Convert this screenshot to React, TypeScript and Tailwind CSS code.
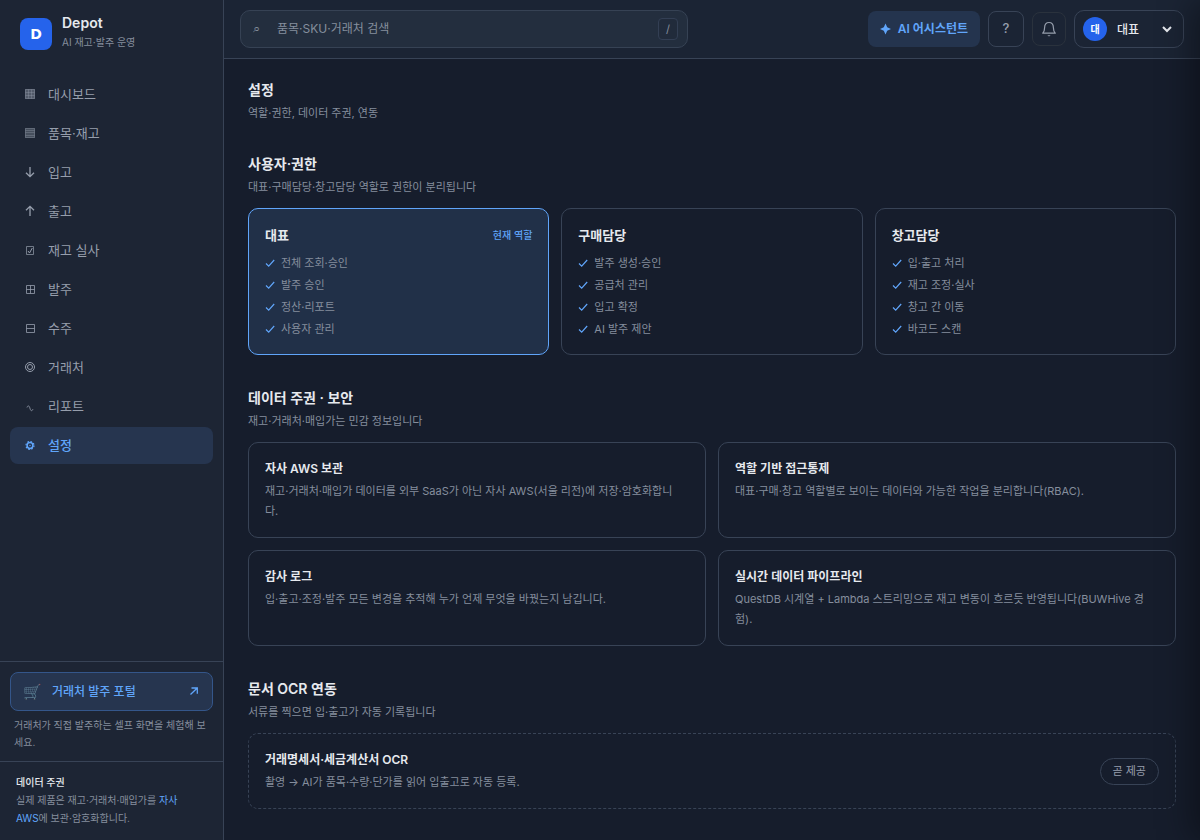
import React from 'react';

const NAV = [
  { icon: 'grid', label: '대시보드' },
  { icon: 'rows', label: '품목·재고' },
  { icon: 'down', label: '입고' },
  { icon: 'up', label: '출고' },
  { icon: 'check', label: '재고 실사' },
  { icon: 'plus', label: '발주' },
  { icon: 'minus', label: '수주' },
  { icon: 'rings', label: '거래처' },
  { icon: 'wave', label: '리포트' },
  { icon: 'gear', label: '설정', active: true },
];

const ROLES = [
  { name: '대표', current: true, perms: ['전체 조회·승인', '발주 승인', '정산·리포트', '사용자 관리'] },
  { name: '구매담당', perms: ['발주 생성·승인', '공급처 관리', '입고 확정', 'AI 발주 제안'] },
  { name: '창고담당', perms: ['입·출고 처리', '재고 조정·실사', '창고 간 이동', '바코드 스캔'] },
];

const POLICIES = [
  { title: '자사 AWS 보관', text: '재고·거래처·매입가 데이터를 외부 SaaS가 아닌 자사 AWS(서울 리전)에 저장·암호화합니다.' },
  { title: '역할 기반 접근통제', text: '대표·구매·창고 역할별로 보이는 데이터와 가능한 작업을 분리합니다(RBAC).' },
  { title: '감사 로그', text: '입·출고·조정·발주 모든 변경을 추적해 누가 언제 무엇을 바꿨는지 남깁니다.' },
  { title: '실시간 데이터 파이프라인', text: 'QuestDB 시계열 + Lambda 스트리밍으로 재고 변동이 흐르듯 반영됩니다(BUWHive 경험).' },
];

const ICONS: Record<string, React.ReactNode> = {
  grid: (
    <>
      <rect x="3" y="3" width="10" height="10" fill="currentColor" opacity="0.45" stroke="none" />
      <path d="M3.5 3.5h9v9h-9zM6.5 3.5v9M9.5 3.5v9M3.5 6.5h9M3.5 9.5h9" opacity="0.35" />
    </>
  ),
  rows: (
    <>
      <rect x="3" y="3" width="10" height="10" fill="currentColor" opacity="0.35" stroke="none" />
      <path d="M3.5 3.5h9v9h-9zM3.5 5.5h9M3.5 7.5h9M3.5 10.5h9" opacity="0.35" />
    </>
  ),
  down: <path d="M8 3v9.5M4 8.7l4 4 4-4" strokeWidth="1.3" />,
  up: <path d="M8 13V3.5M4 7.3l4-4 4 4" strokeWidth="1.3" />,
  check: (
    <>
      <path d="M4.5 4.5h7v8h-7z" opacity="0.7" />
      <path d="M6 9l1.5 2 2.8-5" />
    </>
  ),
  plus: <path d="M4.5 4.5h8v8h-8zM8.5 4.5v8M4.5 8.5h8" opacity="0.8" />,
  minus: <path d="M4.5 4.5h8v8h-8zM4.5 8.5h8" opacity="0.8" />,
  rings: (
    <>
      <circle cx="8" cy="8" r="4.5" />
      <circle cx="8" cy="8" r="2.5" />
    </>
  ),
  wave: <path d="M5 9.5c.4-1.8 2-2.2 2.6-.3l.7 2.2c.6 1.9 2.200 1.5 2.6-.3" opacity="0.8" />,
  gear: (
    <>
      <circle cx="8" cy="8.5" r="2.9" strokeWidth="1.5" />
      <circle cx="8" cy="8.5" r="0.7" fill="currentColor" stroke="none" />
      <circle cx="8" cy="8.5" r="4" strokeWidth="1.2" strokeDasharray="1.57 1.57" />
    </>
  ),
};

const NavIcon: React.FC<{ name: string }> = ({ name }) => (
  <svg width="16" height="17" viewBox="0 0 16 17" fill="none" stroke="currentColor" aria-hidden="true">
    {ICONS[name]}
  </svg>
);

const Sidebar: React.FC = () => (
  <aside className="sticky top-0 flex h-screen w-56 shrink-0 flex-col border-r border-[#384356] bg-[#1d2534]">
    <div className="flex items-center gap-2.5 px-5 pt-3.5">
      <div className="flex h-8 w-8 items-center justify-center rounded-lg bg-[#2563eb] font-['DejaVu_Sans',sans-serif] text-sm font-bold text-white">D</div>
      <div className="pb-0.5">
        <p className="text-sm leading-[18px] font-semibold text-[#e6e9ee]">Depot</p>
        <p className="text-[10px] leading-5 text-[#858e9d]">AI 재고·발주 운영</p>
      </div>
    </div>

    <nav className="mt-[22px] flex flex-1 flex-col gap-0.5 px-2.5">
      {NAV.map((item) => (
        <a
          key={item.label}
          href="#"
          className={`flex h-[37px] items-center gap-2.5 rounded-lg px-3 text-[13px] ${
            item.active ? 'bg-[#26354f] font-medium text-[#60a5fa]' : 'text-[#969eac]'
          }`}
        >
          <NavIcon name={item.icon} />
          {item.label}
        </a>
      ))}
    </nav>

    <div className="border-t border-[#384356] p-2.5">
      <a
        href="#"
        className="flex h-[39px] items-center gap-2.5 rounded-lg border border-[#34568a] bg-[#26354f] px-3 text-xs font-medium text-[#60a5fa]"
      >
        <span className="text-[15px] opacity-60" aria-hidden="true">🛒</span>
        <span className="flex-1">거래처 발주 포털</span>
        <svg width="12" height="14" viewBox="0 0 12 14" fill="none" stroke="currentColor" strokeWidth="1.3" aria-hidden="true">
          <path d="M2.5 9.500l6.500-6.300M3.500 3h5.800v5.800" />
        </svg>
      </a>
      <p className="mt-1.5 px-1 text-[10px] leading-[17px] text-[#858e9d]">
        거래처가 직접 발주하는 셀프 화면을 체험해 보세요.
      </p>
    </div>

    <div className="border-t border-[#384356] px-4 pt-[11px] pb-[13px] text-[10px] leading-[18px] text-[#858e9d]">
      <p className="font-medium text-[#e6e9ee]">데이터 주권</p>
      <p className="pr-4">
        실제 제품은 재고·거래처·매입가를 <span className="text-[#60a5fa]">자사</span>{' '}
        <span className="text-[#60a5fa]">AWS</span>에 보관·암호화합니다.
      </p>
    </div>
  </aside>
);

const Topbar: React.FC = () => (
  <header className="flex h-[59px] items-center justify-between gap-4 border-b border-[#384356] bg-[#1b2434] px-4">
    <label className="flex h-[38px] w-full max-w-md items-center rounded-[10px] border border-[#364254] bg-[#232e3e] pr-[9px] pl-3 text-[#858e9d]">
      <span className="w-6 text-[13px]" aria-hidden="true">⌕</span>
      <input
        type="text"
        aria-label="검색"
        placeholder="품목·SKU·거래처 검색"
        className="min-w-0 flex-1 bg-transparent text-xs outline-none placeholder:text-[#858e9d]"
      />
      <kbd className="flex h-[22px] w-5 items-center justify-center rounded border border-[#333f54] bg-[#212b3b] font-['Inter'] text-[11px]">/</kbd>
    </label>

    <div className="flex shrink-0 items-center gap-2">
      <button className="flex h-9 items-center gap-1.5 rounded-lg bg-[#24344e] px-3 text-xs font-semibold text-[#60a5fa]">
        <svg width="12" height="12" viewBox="0 0 12 12" fill="currentColor" aria-hidden="true">
          <path d="M5.500 .5l1.700 3.800L11 6 7.200 7.700l-1.700 3.800-1.700-3.800L0 6l3.800-1.700z" />
        </svg>
        AI 어시스턴트
      </button>
      <button aria-label="도움말" className="h-9 w-9 rounded-lg border border-[#384356] text-[13px] font-medium text-[#969eac]">?</button>
      <button aria-label="알림" className="flex h-[34px] w-[34px] items-center justify-center rounded-lg border border-[#2a323d] text-[#969eac]">
        <svg width="16" height="16" viewBox="0 0 16 16" fill="none" stroke="currentColor" strokeWidth="1.2" strokeLinejoin="round" aria-hidden="true">
          <path d="M1.700 12.200h12.600c-1.300-1.200-1.900-2.200-1.900-5.400 0-3.200-1.900-5.300-4.400-5.300S3.600 3.600 3.600 6.800c0 3.200-.6 4.200-1.900 5.400z" />
          <path d="M6.300 14.200h3.400L8 15.600z" fill="currentColor" stroke="none" />
        </svg>
      </button>
      <label className="flex h-[38px] items-center gap-1.5 rounded-[10px] border border-[#384356] px-2">
        <span className="flex h-6 w-6 items-center justify-center rounded-full bg-[#2563eb] text-[10px] font-bold text-white">대</span>
        <select aria-label="역할" className="w-[62px] bg-transparent text-xs font-medium text-[#e6e9ee] outline-none">
          <option>대표</option>
          <option>구매담당</option>
          <option>창고담당</option>
        </select>
      </label>
    </div>
  </header>
);

const SectionHead: React.FC<{ title: string; text: string }> = ({ title, text }) => (
  <div className="mb-[11px]">
    <h2 className="text-sm leading-[22px] font-semibold text-[#e6e9ee]">{title}</h2>
    <p className="mt-0.5 text-[11px] leading-5 text-[#858e9d]">{text}</p>
  </div>
);

export default function App() {
  return (
    <div className="flex min-h-screen overflow-x-clip bg-[#161d2c] font-['Inter','Noto_Sans_CJK_KR',sans-serif]">
      <Sidebar />

      <div className="min-w-0 flex-1">
        <Topbar />

        <main className="px-6 pt-5">
          <div className="mb-[30px]">
            <h1 className="text-sm leading-[22px] font-semibold text-[#e6e9ee]">설정</h1>
            <p className="mt-0.5 text-[11px] leading-5 text-[#858e9d]">역할·권한, 데이터 주권, 연동</p>
          </div>

          {/* Roles */}
          <section className="mb-8">
            <SectionHead title="사용자·권한" text="대표·구매담당·창고담당 역할로 권한이 분리됩니다" />
            <div className="grid grid-cols-3 gap-3">
              {ROLES.map((role) => (
                <div
                  key={role.name}
                  className={`rounded-[10px] border p-4 ${role.current ? 'border-[#60a5fa] bg-[#213048]' : 'border-[#384356]'}`}
                >
                  <div className="mb-2 flex items-center justify-between leading-[21px]">
                    <h3 className="text-[13px] font-semibold text-[#e6e9ee]">{role.name}</h3>
                    {role.current && <span className="text-[10px] font-medium text-[#60a5fa]">현재 역할</span>}
                  </div>
                  <ul className="flex flex-col gap-1 text-[11px] leading-[18px] text-[#858e9d]">
                    {role.perms.map((perm) => (
                      <li key={perm} className="flex items-center gap-1.5">
                        <svg width="10" height="10" viewBox="0 0 10 10" fill="none" stroke="#60a5fa" strokeWidth="1.2" aria-hidden="true">
                          <path d="M1 5.500l2.700 2.700L9.200 2" />
                        </svg>
                        {perm}
                      </li>
                    ))}
                  </ul>
                </div>
              ))}
            </div>
          </section>

          {/* Data policies */}
          <section className="mb-8">
            <SectionHead title="데이터 주권 · 보안" text="재고·거래처·매입가는 민감 정보입니다" />
            <div className="grid grid-cols-2 gap-3">
              {POLICIES.map((policy) => (
                <div key={policy.title} className="rounded-[10px] border border-[#384356] p-4">
                  <h3 className="text-xs leading-5 font-semibold text-[#e6e9ee]">{policy.title}</h3>
                  <p className="mt-0.5 pr-2 text-[11px] leading-5 text-[#858e9d]">{policy.text}</p>
                </div>
              ))}
            </div>
          </section>

          {/* OCR */}
          <section className="pb-6">
            <SectionHead title="문서 OCR 연동" text="서류를 찍으면 입·출고가 자동 기록됩니다" />
            <div className="flex items-center justify-between gap-4 rounded-[10px] border border-dashed border-[#384356] p-4">
              <div>
                <h3 className="text-xs leading-5 font-semibold text-[#e6e9ee]">거래명세서·세금계산서 OCR</h3>
                <p className="mt-0.5 text-[11px] leading-5 text-[#858e9d]">촬영 → AI가 품목·수량·단가를 읽어 입출고로 자동 등록.</p>
              </div>
              <span className="rounded-full border border-[#384356] px-3 text-[11px] leading-[25px] text-[#969eac]">곧 제공</span>
            </div>
          </section>
        </main>
      </div>

      {/* Closed assistant drawer, only its shadow reaches the page */}
      <div className="pointer-events-none fixed inset-y-0 right-0 w-96 translate-x-full shadow-[-8px_0_32px_rgba(0,0,0,0.4)]" />
    </div>
  );
}
